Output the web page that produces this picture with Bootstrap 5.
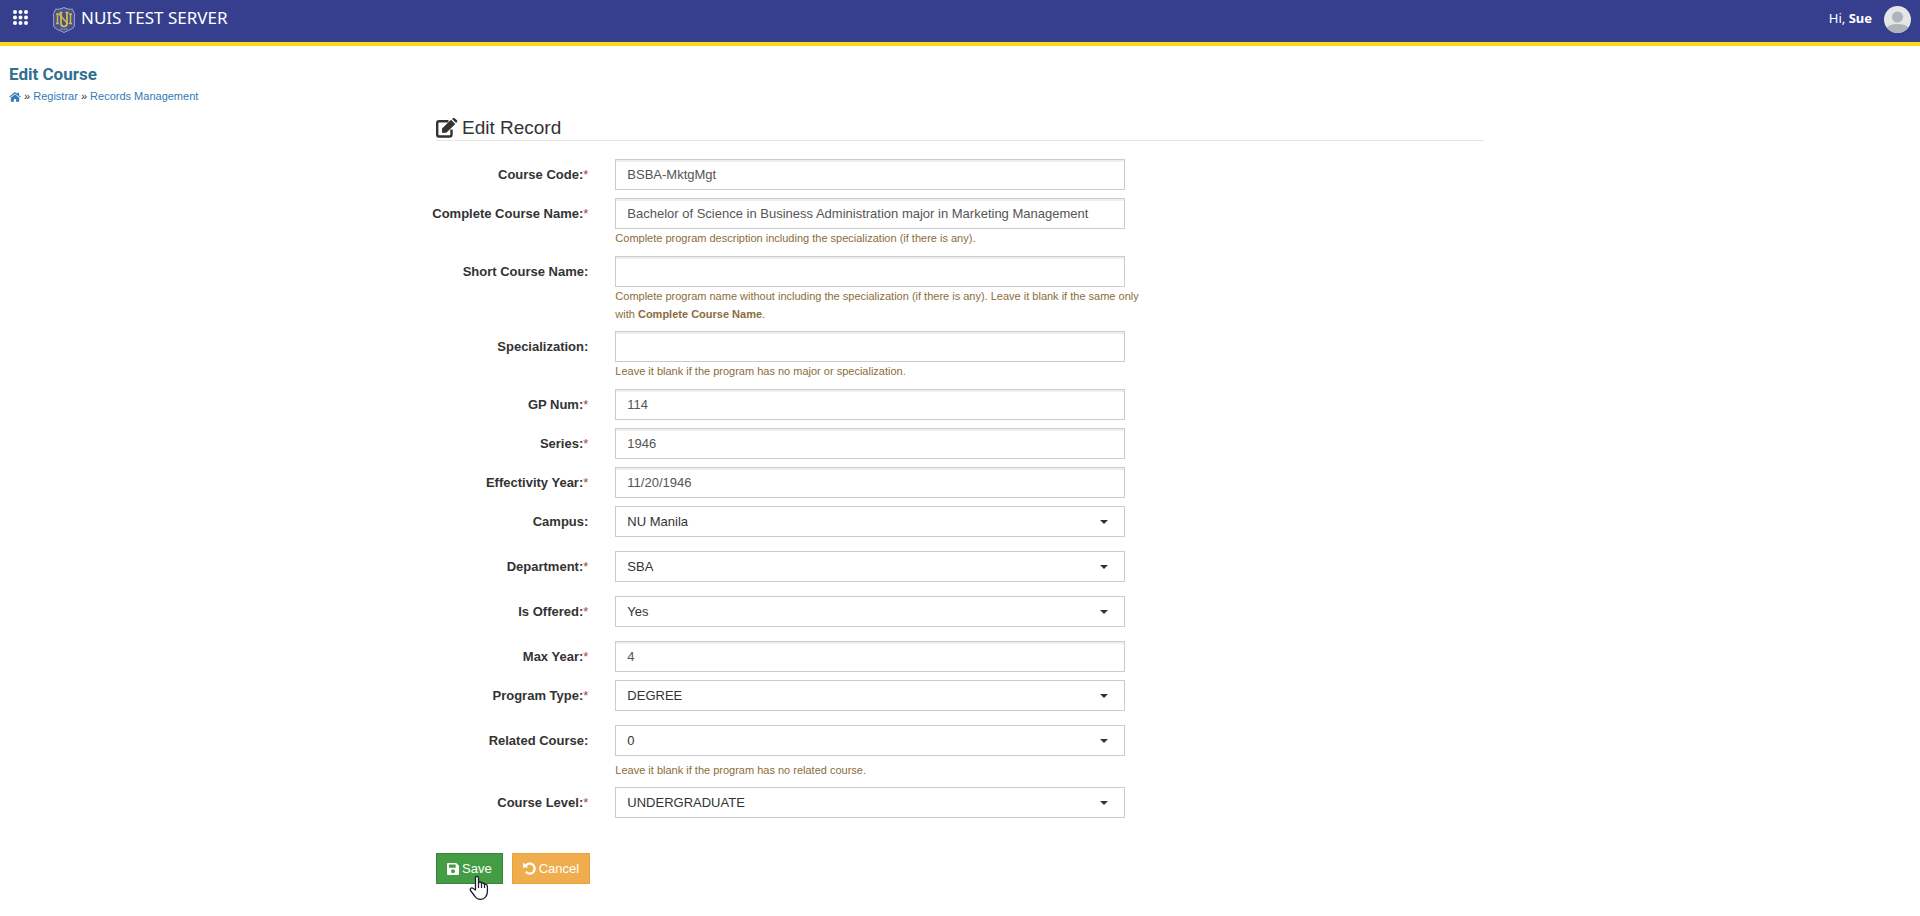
<!DOCTYPE html>
<html lang="en">
<head>
<meta charset="utf-8">
<meta name="viewport" content="width=device-width, initial-scale=1">
<title>Edit Course</title>
<link href="https://cdn.jsdelivr.net/npm/bootstrap@5.3.0/dist/css/bootstrap.min.css" rel="stylesheet">
<style>
  body { font-family: "Liberation Sans", Arial, sans-serif; font-size: 13px; line-height: 18px; color: #333; background: #fff; }
  a { color: #337ab7; text-decoration: none; }
  .topbar { background: #353f8e; border-bottom: 4px solid #fed61b; height: 46px; padding: 0 9px 3px 13px; font-family: "Noto Sans", sans-serif; }
  .menu-btn { width: 15px; height: 15px; color: #fff; margin: 0 24px 4px 0; }
  .brand { font-size: 17px; line-height: 24px; color: #fff; gap: 5px; }
  .brand-text { margin-bottom: 4px; }
  .user-name { font-size: 13px; margin-bottom: 4px; color: #fff; }
  .page-head { padding: 16px 9px 0; }
  .page-title { font: 700 17px/24px Roboto, sans-serif; color: #31708f; margin: 0 0 2px; }
  .crumbs { font-size: 11px; line-height: 16px; color: #333; }
  .record { --bs-gutter-x: 28px; max-width: 1076px; padding-top: 12px; padding-bottom: 30px; }
  .record .row { --bs-gutter-x: 28px; }
  .record-title { font-size: 19px; line-height: 24px; font-weight: 400; border-bottom: 1px solid #e5e5e5; margin-bottom: 18px; }
  .field-row { margin-bottom: 8px; }
  .field-row.has-select { margin-bottom: 14px; }
  .field-label { font-weight: 700; text-align: right; line-height: 31px; padding: 0 13px 0 0; white-space: nowrap; display: block; }
  .req { color: #a94442; font-weight: 400; }
  .form-control, .form-select { height: 31px; border: 1px solid #ccc; border-radius: 0; padding: 0 11px; font-size: 13px; line-height: 18px; }
  .form-control { color: #555; box-shadow: inset 0 2px 0 #eee; }
  .form-select { color: #333; background-color: #fff; background-size: 8px 4px; background-position: right 16px center;
    background-image: url("data:image/svg+xml,%3Csvg xmlns='http://www.w3.org/2000/svg' viewBox='0 0 8 4'%3E%3Cpath fill='%23333' d='M0 0h8L4 4z'/%3E%3C/svg%3E"); }
  .hint { font-size: 11px; line-height: 18px; min-height: 19px; color: #8a6d3b; }
  .hint-low { padding-top: 5px; min-height: 23px; }
  .actions { margin-top: 35px; gap: 9px; }
  .actions .btn { height: 31px; border-radius: 0; padding: 0 10px; font-size: 13px; line-height: 18px; color: #fff; gap: 3px; }
  .actions .btn-save { background: #449d44; border-color: #398439; }
  .actions .btn-cancel { background: #f0ad4e; border-color: #eea236; }
  .hand { left: 33px; top: 22px; pointer-events: none; }
</style>
</head>
<body class="min-vh-100">
<header class="topbar d-flex align-items-center justify-content-between">
  <div class="d-flex align-items-center">
    <button type="button" class="menu-btn btn p-0 border-0 d-flex" aria-label="Apps">
      <svg width="15" height="15" viewBox="0 0 15 15" fill="currentColor"><circle cx="2" cy="2" r="2"/><circle cx="7.500" cy="2" r="2"/><circle cx="13" cy="2" r="2"/><circle cx="2" cy="7.500" r="2"/><circle cx="7.500" cy="7.500" r="2"/><circle cx="13" cy="7.500" r="2"/><circle cx="2" cy="13" r="2"/><circle cx="7.500" cy="13" r="2"/><circle cx="13" cy="13" r="2"/></svg>
    </button>
    <a href="#" class="brand d-flex align-items-center">
      <svg width="24" height="28" viewBox="0 0 24 28" fill="none">
        <path d="M12 1.500C9.500 3 6.500 3.500 3.500 3.200C3 5.500 1.500 7 1.300 8.500C2.500 12 1 17 1.800 20C2.600 23.500 8 24 12 26.500C16 24 21.400 23.500 22.200 20C23 17 21.500 12 22.700 8.500C22.500 7 21 5.500 20.500 3.200C17.500 3.500 14.500 3 12 1.500Z" fill="#46518f" stroke="#a9aec9" stroke-width="1"/>
        <path d="M4 8h3l9 10M5.500 8v9.500M4 17.500h3M20 8h-3M18.500 8v9.500M20 17.500h-3" stroke="#cdb752" stroke-width="1.500"/>
        <path d="M7.500 6.500h3M9 6.500v11c0 4 6 4 6 0v-11M13.500 6.500h3" stroke="#dcc13f" stroke-width="1.700"/>
        <path d="M8.500 23h7" stroke="#b5b9cf" stroke-width="1.200" stroke-dasharray="1.200 .6"/>
      </svg>
      <span class="brand-text">NUIS TEST SERVER</span>
    </a>
  </div>
  <a href="#" class="d-flex align-items-center">
    <span class="user-name me-2 pe-1">Hi, <strong>Sue</strong></span>
    <svg width="27" height="27" viewBox="0 0 27 27"><defs><clipPath id="face"><circle cx="13.500" cy="13.500" r="13.500"/></clipPath></defs><g clip-path="url(#face)"><path fill="#e4e6e7" d="M0 0h27v27H0z"/><circle cx="13.500" cy="11" r="5.600" fill="#aeb4b7"/><path fill="#aeb4b7" d="M3 27V21.500Q5 18 13.500 18T24 21.500V27z"/></g></svg>
  </a>
</header>

<main>
  <div class="page-head">
    <h1 class="page-title">Edit Course</h1>
    <nav class="crumbs" aria-label="Breadcrumb">
      <a href="#" aria-label="Home"><svg width="12" height="10" viewBox="0 0 12 10" fill="currentColor"><path d="M6 2.200L1.800 5.700V9.400q0 .4.400.4H4.900V6.900H7.100V9.800H9.800q.4 0 .4-.4V5.700z"/><path d="M6 .2Q6.400.2 6.800.5L8.400 1.800V.8H10V3.200L11.900 4.800L11.300 5.600L6 1.400L.7 5.600L.1 4.800L5.200.5Q5.600.2 6 .2z"/></svg></a>
      » <a href="#">Registrar</a> » <a href="#">Records Management</a>
    </nav>
  </div>

  <form class="record container-fluid mx-auto">
    <h2 class="record-title d-flex align-items-center">
      <svg class="me-1" width="22" height="20" viewBox="0 0 22 20"><path d="M15.500 11.500V16.500Q15.500 18.500 13.500 18.500H3Q1.200 18.500 1.200 16.500V5Q1.200 3.200 3 3.200H12.500" fill="none" stroke="#333" stroke-width="2.400"/><path fill="#333" d="M6 14.800V10.500L15 1.800L19.300 6L10.300 14.800zM16 1L17 .2Q18 -.4 18.900.4L20.900 2.300Q21.700 3 20.900 4L20.100 5z"/></svg>
      <span>Edit Record</span>
    </h2>

    <div class="row field-row">
      <label class="col-2 field-label" for="code">Course Code:<span class="req">*</span></label>
      <div class="col-6"><input class="form-control" id="code" type="text" value="BSBA-MktgMgt"></div>
    </div>
    <div class="row field-row">
      <label class="col-2 field-label" for="name">Complete Course Name:<span class="req">*</span></label>
      <div class="col-6"><input class="form-control" id="name" type="text" value="Bachelor of Science in Business Administration major in Marketing Management">
        <div class="hint">Complete program description including the specialization (if there is any).</div></div>
    </div>
    <div class="row field-row">
      <label class="col-2 field-label" for="short">Short Course Name:</label>
      <div class="col-6"><input class="form-control" id="short" type="text">
        <div class="hint text-nowrap">Complete program name without including the specialization (if there is any). Leave it blank if the same only<br>with <strong>Complete Course Name</strong>.</div></div>
    </div>
    <div class="row field-row">
      <label class="col-2 field-label" for="spec">Specialization:</label>
      <div class="col-6"><input class="form-control" id="spec" type="text">
        <div class="hint">Leave it blank if the program has no major or specialization.</div></div>
    </div>
    <div class="row field-row">
      <label class="col-2 field-label" for="gp">GP Num:<span class="req">*</span></label>
      <div class="col-6"><input class="form-control" id="gp" type="text" value="114"></div>
    </div>
    <div class="row field-row">
      <label class="col-2 field-label" for="series">Series:<span class="req">*</span></label>
      <div class="col-6"><input class="form-control" id="series" type="text" value="1946"></div>
    </div>
    <div class="row field-row">
      <label class="col-2 field-label" for="eff">Effectivity Year:<span class="req">*</span></label>
      <div class="col-6"><input class="form-control" id="eff" type="text" value="11/20/1946"></div>
    </div>
    <div class="row field-row has-select">
      <label class="col-2 field-label" for="campus">Campus:</label>
      <div class="col-6"><select class="form-select" id="campus"><option>NU Manila</option></select></div>
    </div>
    <div class="row field-row has-select">
      <label class="col-2 field-label" for="dept">Department:<span class="req">*</span></label>
      <div class="col-6"><select class="form-select" id="dept"><option>SBA</option></select></div>
    </div>
    <div class="row field-row has-select">
      <label class="col-2 field-label" for="offered">Is Offered:<span class="req">*</span></label>
      <div class="col-6"><select class="form-select" id="offered"><option>Yes</option></select></div>
    </div>
    <div class="row field-row">
      <label class="col-2 field-label" for="maxyear">Max Year:<span class="req">*</span></label>
      <div class="col-6"><input class="form-control" id="maxyear" type="text" value="4"></div>
    </div>
    <div class="row field-row has-select">
      <label class="col-2 field-label" for="ptype">Program Type:<span class="req">*</span></label>
      <div class="col-6"><select class="form-select" id="ptype"><option>DEGREE</option></select></div>
    </div>
    <div class="row field-row">
      <label class="col-2 field-label" for="related">Related Course:</label>
      <div class="col-6"><select class="form-select" id="related"><option>0</option></select>
        <div class="hint hint-low">Leave it blank if the program has no related course.</div></div>
    </div>
    <div class="row">
      <label class="col-2 field-label" for="level">Course Level:<span class="req">*</span></label>
      <div class="col-6"><select class="form-select" id="level"><option>UNDERGRADUATE</option></select></div>
    </div>

    <div class="actions d-flex position-relative">
      <button type="button" class="btn btn-save d-flex align-items-center">
        <svg width="12" height="12" viewBox="0 0 12 12"><path fill="#fff" fill-rule="evenodd" d="M1 0H9.200L12 2.800V11Q12 12 11 12H1Q0 12 0 11V1Q0 0 1 0zM2 1.500V4.700H8.700V1.500zM6 6.300A2 2 0 1 0 6 10.300A2 2 0 1 0 6 6.300z"/></svg>
        <span>Save</span>
      </button>
      <button type="button" class="btn btn-cancel d-flex align-items-center">
        <svg width="13" height="13" viewBox="0 0 13 13"><path fill="none" stroke="#fff" stroke-width="2.200" d="M2.600 3.800A5 5 0 1 1 2.800 9.800"/><path fill="#fff" d="M0 .5V5.600H5.200z"/></svg>
        <span>Cancel</span>
      </button>
      <svg class="hand position-absolute z-1" width="20" height="26" viewBox="0 0 20 26"><path d="M6.500 15V3Q6.500 1.300 8 1.300Q9.500 1.300 9.500 3V8.500Q9.700 7 11 7Q12.500 7 12.500 8.700Q13 7.700 14.200 8Q15.500 8.300 15.500 9.700Q16 9 17 9.300Q18.400 9.700 18.400 11.300V16.500Q18.400 20 16.500 22Q15 24.300 11.500 24.300Q7.800 24.300 6 21.500L1.500 15.500Q.8 14 2 13.200Q3.200 12.600 4.300 13.500z" fill="#fff" stroke="#1d1d2b" stroke-width="1.300" stroke-linejoin="round"/><path d="M9.500 8.500V13M12.500 8.700V13M15.500 9.700V13" stroke="#1d1d2b" stroke-width="1.200"/></svg>
    </div>
  </form>
</main>
<script src="https://cdn.jsdelivr.net/npm/bootstrap@5.3.0/dist/js/bootstrap.bundle.min.js"></script>
</body>
</html>
